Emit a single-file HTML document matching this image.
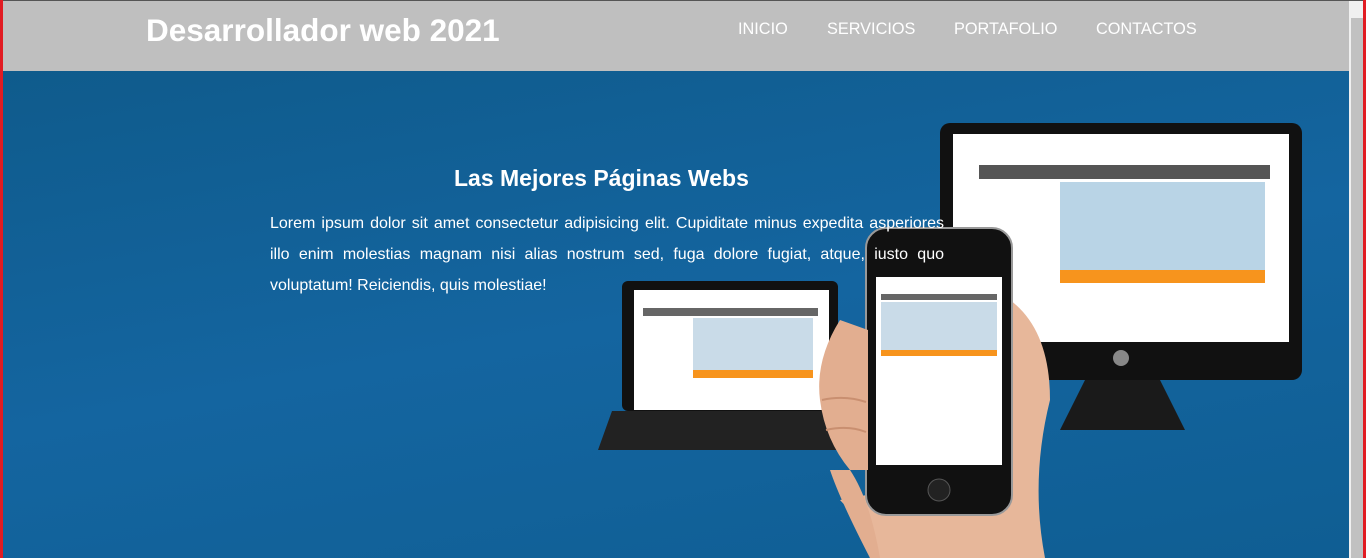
<!DOCTYPE html>
<html><head><style>
*{margin:0;padding:0;box-sizing:border-box}
body{width:1366px;height:558px;overflow:hidden;font-family:"Liberation Sans",Arial,sans-serif;background:#fff;position:relative}
.top{position:absolute;left:0;top:0;width:1366px;height:1px;background:#555}
.redl{position:absolute;left:0;top:0;width:3px;height:558px;background:#e11b22;z-index:5}
.redr{position:absolute;right:0;top:0;width:3px;height:558px;background:#e11b22;z-index:5}
.sb{position:absolute;left:1349px;top:1px;width:14px;height:557px;background:#f0f0f0}
.thumb{position:absolute;left:1351px;top:18px;width:12px;height:540px;background:#c1c1c1}
header{position:absolute;left:3px;top:1px;width:1346px;height:70px;background:#bfbfbf}
h1{position:absolute;left:143px;top:11px;color:#fff;font-size:31.5px;font-weight:bold}
nav a{position:absolute;top:19px;color:#fff;font-size:16.3px;text-decoration:none}
.hero{position:absolute;left:3px;top:71px;width:1346px;height:487px;background:linear-gradient(170deg,#0f5b8c,#1465a0 50%,#0f5e93)}
h2{position:absolute;left:454px;top:165px;color:#fff;font-size:23px;font-weight:bold}
p{position:absolute;left:270px;top:208px;width:674px;color:#fff;font-size:16px;line-height:31px;text-align:justify}
</style></head><body>
<div class="top"></div>
<header><h1>Desarrollador web 2021</h1>
<nav><a style="left:735px">INICIO</a><a style="left:824px">SERVICIOS</a><a style="left:951px">PORTAFOLIO</a><a style="left:1093px">CONTACTOS</a></nav></header>
<div class="hero"></div>
<svg style="position:absolute;left:0;top:0" width="1366" height="558">
<path d="M1085 380 L1160 380 L1185 430 L1060 430Z" fill="#1a1a1a"/>
<rect x="940" y="123" width="362" height="257" rx="10" fill="#111"/>
<rect x="953" y="134" width="336" height="208" fill="#fff"/>
<rect x="979" y="165" width="291" height="14" fill="#555"/>
<rect x="1060" y="182" width="205" height="100" fill="#b9d4e6"/>
<rect x="1060" y="270" width="205" height="13" fill="#f7941d"/>
<circle cx="1121" cy="358" r="8" fill="#888"/>
<rect x="622" y="281" width="216" height="130" rx="6" fill="#111"/>
<rect x="634" y="290" width="195" height="120" fill="#fff"/>
<rect x="643" y="308" width="175" height="8" fill="#666"/>
<rect x="693" y="318" width="120" height="55" fill="#c9dbe8"/>
<rect x="693" y="370" width="120" height="8" fill="#f7941d"/>
<path d="M612 411 L850 411 L860 450 L598 450Z" fill="#222"/>
<path d="M1010 300 Q1050 330 1050 400 Q1030 480 1045 558 L870 558 Q860 520 840 500 L1000 470 Z" fill="#e7b79a"/>
<rect x="866" y="228" width="146" height="287" rx="20" fill="#111" stroke="#999" stroke-width="2"/>
<rect x="876" y="277" width="126" height="188" fill="#fff"/>
<rect x="881" y="294" width="116" height="6" fill="#666"/>
<rect x="881" y="302" width="116" height="48" fill="#c9dbe8"/>
<rect x="881" y="350" width="116" height="6" fill="#f7941d"/>
<circle cx="939" cy="490" r="11" fill="#222" stroke="#555"/>
<path d="M840 320 Q815 360 820 400 Q825 440 850 470 Q870 500 880 558 L870 558 Q840 500 830 470 L868 470 L868 330 Z" fill="#e2ae90"/>
<path d="M822 400 Q845 395 866 402 M826 430 Q848 425 866 432" stroke="#c98f70" stroke-width="2" fill="none"/>
</svg>
<h2>Las Mejores Páginas Webs</h2>
<p>Lorem ipsum dolor sit amet consectetur adipisicing elit. Cupiditate minus expedita asperiores illo enim molestias magnam nisi alias nostrum sed, fuga dolore fugiat, atque, iusto quo voluptatum! Reiciendis, quis molestiae!</p>
<div class="sb"></div><div class="thumb"></div>
<div class="redl"></div><div class="redr"></div>
</body></html>
